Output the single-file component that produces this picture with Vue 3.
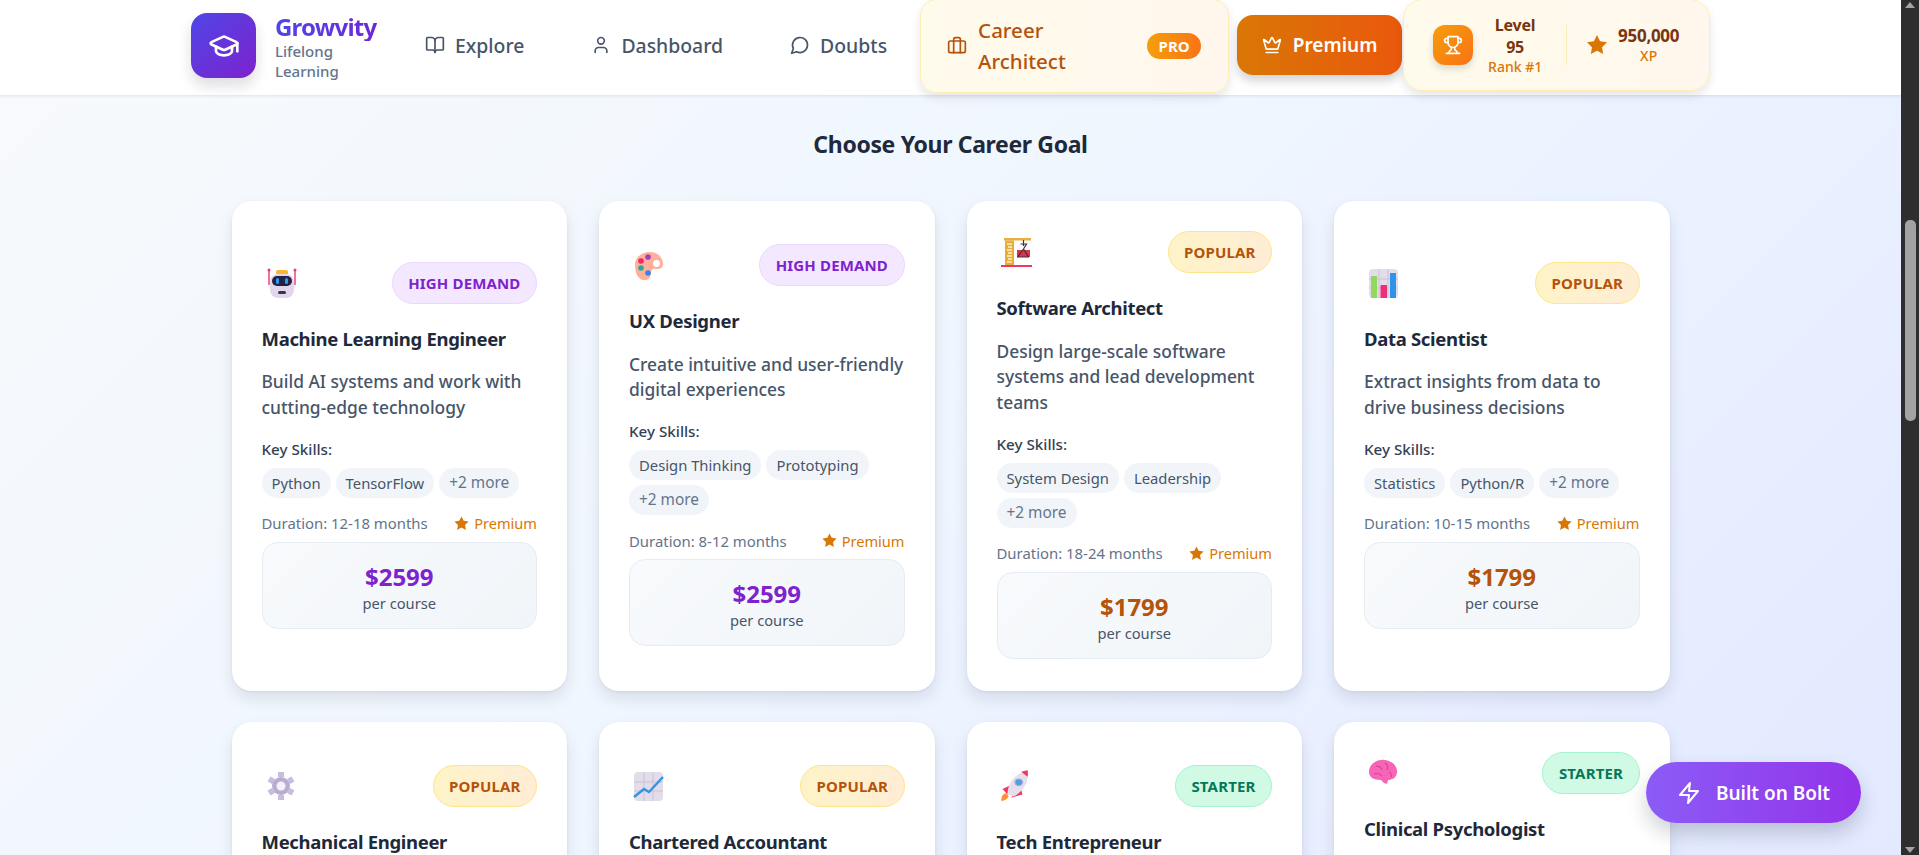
<script setup>
const cards = [
  { icon: 'robot', title: 'Machine Learning Engineer', desc: 'Build AI systems and work with cutting-edge technology', skills: ['Python', 'TensorFlow'], duration: '12-18 months', price: '$2599', tier: 'high', label: 'HIGH DEMAND' },
  { icon: 'palette', title: 'UX Designer', desc: 'Create intuitive and user-friendly digital experiences', skills: ['Design Thinking', 'Prototyping'], duration: '8-12 months', price: '$2599', tier: 'high', label: 'HIGH DEMAND' },
  { icon: 'crane', title: 'Software Architect', desc: 'Design large-scale software systems and lead development teams', skills: ['System Design', 'Leadership'], duration: '18-24 months', price: '$1799', tier: 'popular', label: 'POPULAR' },
  { icon: 'bars', title: 'Data Scientist', desc: 'Extract insights from data to drive business decisions', skills: ['Statistics', 'Python/R'], duration: '10-15 months', price: '$1799', tier: 'popular', label: 'POPULAR' },
  { icon: 'gear', title: 'Mechanical Engineer', desc: 'Design and build mechanical systems and machines', skills: ['CAD Design', 'Thermodynamics'], duration: '12-18 months', price: '$1799', tier: 'popular', label: 'POPULAR' },
  { icon: 'chart', title: 'Chartered Accountant', desc: 'Manage financial records and give expert advice', skills: ['Financial Reporting', 'Taxation'], duration: '24-36 months', price: '$1799', tier: 'popular', label: 'POPULAR' },
  { icon: 'rocket', title: 'Tech Entrepreneur', desc: 'Start and scale your own technology company', skills: ['Business Strategy', 'Fundraising'], duration: '12-24 months', price: '$999', tier: 'starter', label: 'STARTER' },
  { icon: 'brain', title: 'Clinical Psychologist', desc: 'Help people understand and improve their mental health and wellbeing', skills: ['Therapy Techniques', 'Assessment'], duration: '24-36 months', price: '$999', tier: 'starter', label: 'STARTER' },
]
</script>

<template>
  <div class="page">
    <div class="main">
      <header class="topbar">
        <div class="logo">
          <svg class="lucide white" width="32" height="32" viewBox="0 0 24 24"><path d="M21.42 10.922a1 1 0 0 0-.019-1.838L12.83 5.18a2 2 0 0 0-1.66 0L2.6 9.08a1 1 0 0 0 0 1.832l8.57 3.908a2 2 0 0 0 1.66 0z"/><path d="M22 10v6"/><path d="M6 12.5V16a6 3 0 0 0 12 0v-3.5"/></svg>
        </div>
        <div class="brand">
          <div class="brand-name">Growvity</div>
          <div class="brand-sub">Lifelong Learning</div>
        </div>
        <nav class="nav">
          <a class="nav-item">
            <svg class="lucide" width="20" height="20" viewBox="0 0 24 24"><path d="M12 7v14"/><path d="M3 18a1 1 0 0 1-1-1V4a1 1 0 0 1 1-1h5a4 4 0 0 1 4 4 4 4 0 0 1 4-4h5a1 1 0 0 1 1 1v13a1 1 0 0 1-1 1h-6a3 3 0 0 0-3 3 3 3 0 0 0-3-3z"/></svg>
            <span>Explore</span>
          </a>
          <a class="nav-item">
            <svg class="lucide" width="20" height="20" viewBox="0 0 24 24"><path d="M19 21v-2a4 4 0 0 0-4-4H9a4 4 0 0 0-4 4v2"/><circle cx="12" cy="7" r="4"/></svg>
            <span>Dashboard</span>
          </a>
          <a class="nav-item">
            <svg class="lucide" width="20" height="20" viewBox="0 0 24 24"><path d="M7.9 20A9 9 0 1 0 4 16.1L2 22Z"/></svg>
            <span>Doubts</span>
          </a>
        </nav>
        <div class="career">
          <svg class="lucide" width="20" height="20" viewBox="0 0 24 24"><path d="M16 20V4a2 2 0 0 0-2-2h-4a2 2 0 0 0-2 2v16"/><rect x="2" y="6" width="20" height="14" rx="2"/></svg>
          <span class="career-name">Career Architect</span>
          <span class="pro">PRO</span>
        </div>
        <button class="premium">
          <svg class="lucide white" width="20" height="20" viewBox="0 0 24 24"><path d="M11.562 3.266a.5.5 0 0 1 .876 0L15.39 8.87a1 1 0 0 0 1.516.294L21.183 5.5a.5.5 0 0 1 .798.519l-2.834 10.246a1 1 0 0 1-.956.734H5.81a1 1 0 0 1-.957-.734L2.02 6.02a.5.5 0 0 1 .798-.519l4.276 3.664a1 1 0 0 0 1.516-.294z"/><path d="M5 21h14"/></svg>
          <span>Premium</span>
        </button>
        <div class="stats">
          <div class="trophy">
            <svg class="lucide white" width="20" height="20" viewBox="0 0 24 24"><path d="M6 9H4.5a2.5 2.5 0 0 1 0-5H6"/><path d="M18 9h1.5a2.5 2.5 0 0 0 0-5H18"/><path d="M4 22h16"/><path d="M10 14.66V17c0 .55-.47.98-.97 1.21C7.85 18.75 7 20.24 7 22"/><path d="M14 14.66V17c0 .55.47.98.97 1.21C16.15 18.75 17 20.24 17 22"/><path d="M18 2H6v7a6 6 0 0 0 12 0V2Z"/></svg>
          </div>
          <div class="level">
            <div class="level-main">Level 95</div>
            <div class="level-sub">Rank #1</div>
          </div>
          <div class="divider"></div>
          <svg class="star" width="24" height="24" viewBox="0 0 24 24"><polygon points="12 2 15.09 8.26 22 9.27 17 14.14 18.18 21.02 12 17.77 5.82 21.02 7 14.14 2 9.27 8.91 8.26 12 2"/></svg>
          <div class="xp">
            <div class="xp-main">950,000</div>
            <div class="xp-sub">XP</div>
          </div>
        </div>
      </header>

      <section class="content">
        <h2 class="heading">Choose Your Career Goal</h2>
        <div class="grid">
          <article v-for="c in cards" :key="c.title" class="card">
            <div class="card-head">
              <svg class="emoji" width="32" height="32" viewBox="0 0 32 32">
                <g v-if="c.icon === 'robot'">
                  <path d="M4 3v15M30 3v15" stroke="#f0386b" stroke-width="1.4"/>
                  <circle cx="4" cy="3" r="1.5" fill="#f0386b"/><circle cx="30" cy="3" r="1.5" fill="#f0386b"/>
                  <rect x="11" y="3" width="12" height="5" rx="2" fill="#f7b733"/>
                  <rect x="5" y="7" width="24" height="24" rx="8" fill="#e2d6ec"/>
                  <rect x="7" y="9" width="20" height="10" rx="5" fill="#252046"/>
                  <rect x="11" y="11" width="3" height="6" rx="1.5" fill="#2c9cf0"/><rect x="20" y="11" width="3" height="6" rx="1.5" fill="#2c9cf0"/>
                  <rect x="13" y="24" width="8" height="3" rx="1.5" fill="#3b3050"/>
                </g>
                <g v-else-if="c.icon === 'palette'">
                  <path d="M3 16C3 8 10 3 18 3c7 0 13 5 13 12 0 4-3 5-6 5-3-.5-6 0-6 4 0 5-4 8-8 7C6 30 3 24 3 16z" fill="#ffb09a"/>
                  <circle cx="24.500" cy="14.500" r="3.400" fill="#fff"/>
                  <circle cx="16" cy="8" r="2.800" fill="#a23dc2"/>
                  <circle cx="9" cy="12" r="2.800" fill="#ee2a6b"/>
                  <circle cx="9" cy="19" r="2.800" fill="#29a6a1"/>
                  <circle cx="16" cy="24" r="2.800" fill="#3a82ea"/>
                </g>
                <g v-else-if="c.icon === 'crane'">
                  <rect x="1" y="29" width="31" height="2" fill="#f0385f"/>
                  <rect x="4" y="2" width="27" height="2.500" fill="#e9ad42"/>
                  <rect x="5" y="4.500" width="9" height="24.500" fill="#e8ad38"/>
                  <path d="M7 8h5M8 11h4M7 14h5M8 17h4M7 20h5M8 23h4M7 26h5" stroke="#fff2c4" stroke-width="1.300"/>
                  <rect x="17" y="14" width="13" height="7" fill="#d9344c"/>
                  <path d="M23.500 4v6M20.500 8h6l-3 5-6 8M23.500 13l5 8M17 21h12" stroke="#45303c" stroke-width="1.200" fill="none"/>
                </g>
                <g v-else-if="c.icon === 'bars'">
                  <rect x="2" y="2" width="29" height="29" rx="4" fill="#e3dcea"/>
                  <path d="M12 2v29M21 2v29M2 12h29M2 21h29" stroke="#cbc3d4"/>
                  <rect x="4" y="9" width="6" height="22" fill="#92d85f"/>
                  <rect x="13.500" y="18" width="6.500" height="13" fill="#ee2f78"/>
                  <rect x="23" y="6" width="6" height="25" fill="#2e93ea"/>
                </g>
                <g v-else-if="c.icon === 'gear'">
                  <path d="M16 2v5M16 25v5M4 9l4.500 2.500M23.500 20.500 28 23M4 23l4.500-2.500M23.500 11.500 28 9" stroke="#c9bddc" stroke-width="6"/>
                  <circle cx="16" cy="16" r="9" fill="#b9adcf"/>
                  <circle cx="16" cy="16" r="4.500" fill="#f4f1f8"/>
                </g>
                <g v-else-if="c.icon === 'chart'">
                  <rect x="2" y="2" width="29" height="29" rx="4" fill="#e3dcea"/>
                  <path d="M12 2v29M21 2v29M2 12h29M2 21h29" stroke="#cbc3d4"/>
                  <path d="M2 27 12 19 17 22 31 7" stroke="#3196e2" stroke-width="2.500" fill="none"/>
                </g>
                <g v-else-if="c.icon === 'rocket'" transform="translate(-5 -2) scale(1.25 1.1)">
                  <path d="M5 30c0-5 2-7 4-7l2 3c-1 2-3 4-6 4z" fill="#fb923c"/>
                  <path d="M6 19l6-3-2 8zM22 24l-2-8-7 11z" fill="#f0385f"/>
                  <path d="M10 24C10 14 16 5 26 2c2 9-3 19-11 24z" fill="#e5dfec"/>
                  <path d="M21 3.500l5-1.500c.5 2.500.4 4 0 6z" fill="#f0385f"/>
                  <circle cx="19" cy="13" r="3" fill="#4aa0e6" stroke="#b5a7c9"/>
                </g>
                <g v-else-if="c.icon === 'brain'">
                  <path d="M2 15C2 7 10 2 18 3c8 1 13 7 12 13-1 5-5 7-9 7l-1 4-3-1-3-3C6 23 2 20 2 15z" fill="#f765b7"/>
                  <path d="M9 9c3 0 5 1 6 4M18 6c3 2 3 5 2 7M7 17c3-1 6 0 8 2M22 15c2 1 3 3 2 5" stroke="#d83f97" stroke-width="1.100" fill="none"/>
                </g>
              </svg>
              <span class="badge" :class="c.tier">{{ c.label }}</span>
            </div>
            <h3 class="title">{{ c.title }}</h3>
            <p class="desc">{{ c.desc }}</p>
            <div class="skills-label">Key Skills:</div>
            <div class="chips">
              <span v-for="s in c.skills" :key="s" class="chip">{{ s }}</span>
              <span class="chip more">+2 more</span>
            </div>
            <div class="meta">
              <span>Duration: {{ c.duration }}</span>
              <span class="prem">
                <svg class="star" width="17" height="17" viewBox="0 0 24 24"><polygon points="12 2 15.09 8.26 22 9.27 17 14.14 18.18 21.02 12 17.77 5.82 21.02 7 14.14 2 9.27 8.91 8.26 12 2"/></svg>
                Premium
              </span>
            </div>
            <div class="price-box">
              <div class="price" :class="c.tier">{{ c.price }}</div>
              <div class="per">per course</div>
            </div>
          </article>
        </div>
      </section>

      <button class="bolt">
        <svg class="lucide white" width="24" height="24" viewBox="0 0 24 24"><path d="M13 2 3 14h9l-1 8 10-12h-9l1-8z"/></svg>
        <span>Built on Bolt</span>
      </button>
    </div>

    <div class="scrollbar">
      <span class="arrow up"></span>
      <span class="thumb"></span>
      <span class="arrow down"></span>
    </div>
  </div>
</template>

<style>
html, body { margin: 0; overflow: hidden; }
</style>

<style scoped>
.page {
  display: flex;
  width: 1919px;
  height: 855px;
  overflow: hidden;
  font-family: "Noto Sans", "Open Sans", sans-serif;
  color: #1e293b;
}
.main {
  position: relative;
  flex: 1;
  min-width: 0;
  overflow: hidden;
  background: linear-gradient(135deg, #f8fafc 0%, #eff6ff 50%, #e3e9ff 100%);
}
.lucide { fill: none; stroke: currentColor; stroke-width: 2; stroke-linecap: round; stroke-linejoin: round; flex: none; }
.white { color: #fff; }
.star { fill: #d97706; flex: none; }

/* header */
.topbar {
  position: relative;
  z-index: 2;
  height: 95px;
  box-sizing: border-box;
  padding-left: 191px;
  display: flex;
  align-items: flex-start;
  background: #fff;
  box-shadow: 0 1px 3px rgba(15, 23, 42, .1);
}
.logo {
  width: 65px;
  height: 65px;
  margin-top: 13px;
  border-radius: 16px;
  display: flex;
  align-items: center;
  justify-content: center;
  background: linear-gradient(135deg, #4f46e5, #7e22ce);
  box-shadow: 0 8px 14px rgba(15, 23, 42, .14);
  flex: none;
}
.brand { width: 102px; margin-left: 19px; margin-top: 12px; flex: none; }
.brand-name {
  font-size: 24px;
  line-height: 29px;
  font-weight: 700;
  letter-spacing: -.8px;
  white-space: nowrap;
  background: linear-gradient(90deg, #4f46e5, #6d28d9);
  -webkit-background-clip: text;
  background-clip: text;
  color: transparent;
}
.brand-sub { width: 80px; font-size: 15px; line-height: 20px; font-weight: 500; color: #64748b; }
.nav { display: flex; gap: 27px; margin-left: 28px; margin-top: 25px; flex: none; }
.nav-item {
  display: flex;
  align-items: center;
  gap: 10px;
  height: 40px;
  padding: 0 20px;
  font-size: 19.400px;
  font-weight: 500;
  color: #475569;
}
.career {
  width: 309px;
  height: 94px;
  margin-top: -1px;
  margin-left: 13px;
  box-sizing: border-box;
  padding: 0 27px 0 26px;
  display: flex;
  align-items: center;
  flex: none;
  border: 1px solid #fdeeb5;
  border-radius: 16px;
  background: linear-gradient(90deg, #fffbeb, #fff7ed);
  box-shadow: 0 5px 10px rgba(15, 23, 42, .1);
  color: #b45309;
}
.career-name { width: 110px; margin-left: 11px; font-size: 20.500px; line-height: 31px; font-weight: 500; }
.pro {
  margin-left: auto;
  width: 54px;
  height: 26px;
  line-height: 26px;
  text-align: center;
  font-size: 15px;
  font-weight: 700;
  color: #fff;
  border-radius: 13px;
  background: linear-gradient(90deg, #f59e0b, #f97316);
}
.premium {
  width: 165px;
  height: 60px;
  margin-left: 8px;
  margin-top: 15px;
  border: 0;
  border-radius: 16px;
  display: flex;
  align-items: center;
  justify-content: center;
  gap: 11px;
  font-family: inherit;
  font-size: 19px;
  font-weight: 600;
  color: #fff;
  background: linear-gradient(90deg, #d97706, #ea580c);
  box-shadow: 0 6px 10px rgba(15, 23, 42, .18);
  flex: none;
}
.stats {
  width: 307px;
  height: 92px;
  margin-top: -1px;
  margin-left: 1px;
  box-sizing: border-box;
  padding: 0 29px 0 29px;
  display: flex;
  align-items: center;
  flex: none;
  border: 1px solid #fdeeb5;
  border-radius: 20px;
  background: linear-gradient(90deg, #fffbeb, #fff7ed);
  box-shadow: 0 5px 10px rgba(15, 23, 42, .1);
}
.trophy {
  width: 40px;
  height: 40px;
  border-radius: 12px;
  display: flex;
  align-items: center;
  justify-content: center;
  background: linear-gradient(135deg, #f59e0b, #f97316);
  box-shadow: 0 4px 7px rgba(15, 23, 42, .14);
  flex: none;
}
.level { width: 60px; margin-left: 12px; text-align: center; flex: none; }
.level-main { font-size: 16px; line-height: 22px; font-weight: 700; letter-spacing: -.2px; color: #78350f; }
.level-sub { font-size: 14px; line-height: 18px; font-weight: 500; color: #d97706; }
.divider { width: 1px; height: 40px; margin-left: 21px; background: #fdeeb5; flex: none; }
.stats .star { margin-left: 18px; }
.xp { margin-left: 9px; text-align: center; }
.xp-main { font-size: 17px; line-height: 22px; font-weight: 700; letter-spacing: -.3px; color: #78350f; }
.xp-sub { font-size: 14px; line-height: 18px; font-weight: 500; color: #d97706; }

/* content */
.content { padding: 0 231.500px 0 231.500px; }
.heading {
  margin: 31px 0 39px;
  text-align: center;
  font-size: 23px;
  line-height: 36px;
  font-weight: 700;
  letter-spacing: -.35px;
  color: #1e293b;
}
.grid { display: grid; grid-template-columns: repeat(4, 1fr); gap: 31px 32px; }
.card {
  height: 490px;
  box-sizing: border-box;
  padding: 0 30px 2px;
  display: flex;
  flex-direction: column;
  justify-content: center;
  border-radius: 20px;
  background: #fff;
  box-shadow: 0 8px 16px rgba(15, 23, 42, .1), 0 1px 3px rgba(15, 23, 42, .06);
}
.card-head { display: flex; align-items: center; justify-content: space-between; }
.emoji { margin-left: 3px; flex: none; }
.badge {
  height: 42px;
  box-sizing: border-box;
  padding: 0 15.500px;
  display: flex;
  align-items: center;
  border-radius: 21px;
  border: 1px solid;
  font-size: 15px;
  font-weight: 700;
  letter-spacing: .15px;
}
.badge.high { color: #7e22ce; background: #f3e8ff; border-color: #ead9fb; }
.badge.popular { color: #b45309; background: linear-gradient(90deg, #fef3c7, #ffedd5); border-color: #fde68a; }
.badge.starter { color: #047857; background: #d1fae5; border-color: #a7f3d0; }
.title { margin: 20px 0 16.500px; font-size: 18.500px; line-height: 29px; font-weight: 700; letter-spacing: -.32px; color: #1e293b; }
.desc { margin: 0 0 18.500px; font-size: 17.400px; line-height: 25.500px; font-weight: 500; color: #475569; }
.skills-label { font-size: 15.200px; line-height: 20px; font-weight: 500; color: #334155; margin-bottom: 9px; }
.chips { display: flex; flex-wrap: wrap; gap: 5px; }
.chip {
  height: 30px;
  box-sizing: border-box;
  padding: 0 10px;
  line-height: 30px;
  border-radius: 15px;
  background: #f1f5f9;
  font-size: 14.800px;
  color: #475569;
}
.chip.more { font-size: 15.400px; color: #64748b; }
.meta {
  margin-top: 15.500px;
  display: flex;
  justify-content: space-between;
  font-size: 14.900px;
  line-height: 20px;
  color: #64748b;
}
.prem { display: flex; align-items: center; gap: 4px; color: #d97706; font-size: 14.600px; }
.price-box {
  margin-top: 8.500px;
  height: 87px;
  box-sizing: border-box;
  padding-top: 16px;
  text-align: center;
  border: 1px solid #e7ecf3;
  border-radius: 16px;
  background: linear-gradient(135deg, #f8fafc, #f1f5f9);
}
.price { font-size: 24px; line-height: 36px; font-weight: 700; }
.price.high { color: #7e22ce; }
.price.popular { color: #b45309; }
.price.starter { color: #047857; }
.per { font-size: 14.700px; line-height: 16px; color: #475569; }

/* floating button */
.bolt {
  position: absolute;
  right: 40px;
  bottom: 32px;
  z-index: 3;
  width: 215px;
  height: 61px;
  border: 0;
  border-radius: 31px;
  display: flex;
  align-items: center;
  justify-content: center;
  gap: 15px;
  font-family: inherit;
  font-size: 19px;
  font-weight: 600;
  color: #fff;
  background: linear-gradient(90deg, #8b5cf6, #9333ea);
  box-shadow: 0 10px 20px rgba(15, 23, 42, .2);
}

/* browser scrollbar */
.scrollbar {
  position: relative;
  width: 18px;
  background: #2e2e2e;
  flex: none;
}
.thumb {
  position: absolute;
  left: 4px;
  top: 220px;
  width: 11px;
  height: 201px;
  border-radius: 5px;
  background: #a3a3a3;
}
.arrow { position: absolute; left: 4px; width: 0; height: 0; border-left: 5.500px solid transparent; border-right: 5.500px solid transparent; }
.arrow.up { top: 2px; border-bottom: 6px solid #a3a3a3; }
.arrow.down { bottom: 2px; border-top: 6px solid #a3a3a3; }
</style>
